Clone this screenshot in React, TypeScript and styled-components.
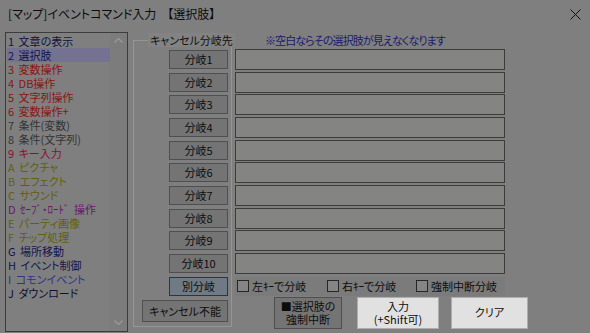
import React from "react";
import styled, { createGlobalStyle } from "styled-components";

const Global = createGlobalStyle`
  html, body { margin: 0; padding: 0; background: #7f7f7f; }
  body {
    font-family: "Noto Sans CJK JP", "Noto Sans", sans-serif;
    font-size: 11px;
  }
  * { box-sizing: border-box; }
`;

const Window = styled.div`
  width: 590px;
  height: 333px;
  overflow: hidden;
  background: #7f7f7f;
  color: #0d0d0d;
  display: flex;
  flex-direction: column;
  font-feature-settings: "palt";
`;

const TitleBar = styled.div`
  height: 28px;
  flex: none;
  display: flex;
  align-items: center;
  justify-content: space-between;
  padding: 0 9px 0 8px;
  font-size: 12px;
`;

const Title = styled.div`
  display: flex;
  gap: 11px;
  white-space: nowrap;
  line-height: 14px;
`;

const Body = styled.div`
  flex: 1;
  min-height: 0;
  display: flex;
  align-items: flex-start;
  padding: 4px 0 0 5px;
`;

const ListBox = styled.div`
  width: 123px;
  height: 300px;
  margin-right: 5px;
  border: 1px solid #3c3c3c;
  display: flex;
  flex: none;
`;

const ListItems = styled.ul`
  list-style: none;
  margin: 0;
  padding: 1px 0 0 1px;
  flex: 1;
`;

const ListItem = styled.li<{ $c: string; $sel?: boolean }>`
  height: 14px;
  line-height: 14px;
  padding-left: 1px;
  word-spacing: 2px;
  color: ${(p) => p.$c};
  background: ${(p) => (p.$sel ? "#737391" : "transparent")};
  white-space: nowrap;
`;

const ScrollBar = styled.div`
  width: 17px;
  background: #7c7c7c;
  display: flex;
  flex-direction: column;
  justify-content: space-between;
  align-items: center;
  padding: 5px 0 6px;
`;

const GroupBox = styled.fieldset`
  margin: 1px 3px 0 0;
  width: 99px;
  min-width: 0;
  min-inline-size: 0;
  height: 294px;
  border: 1px solid #959595;
  padding: 0 3px 4px 9px;
  display: flex;
  flex-direction: column;
  align-items: flex-end;
  flex: none;
`;

const Legend = styled.legend`
  margin-left: 5px;
  padding: 0 2px;
  background: #838383;
  line-height: 14px;
  white-space: nowrap;
  color: #111;
`;

const RowGrid = styled.div`
  margin-top: 2px;
  display: grid;
  grid-template-rows: repeat(11, 21px);
  row-gap: 1.67px;
  align-items: center;
`;

const Btn = styled.button<{ $w?: number; $h?: number; $variant?: "dim" | "focus" | "bright" }>`
  font: inherit;
  font-feature-settings: "palt";
  width: ${(p) => p.$w ?? 59}px;
  height: ${(p) => p.$h ?? 19}px;
  padding: 0;
  line-height: 13px;
  color: #0d0d0d;
  border: 1px solid
    ${(p) => (p.$variant === "focus" ? "#1c3a58" : p.$variant === "bright" ? "#adadad" : "#4f4f4f")};
  background: ${(p) =>
    p.$variant === "focus" ? "#6f7a85" : p.$variant === "bright" ? "#e1e1e1" : "#747474"};
  white-space: pre;
`;

const CancelWrap = styled.div`
  margin-top: auto;
`;

const Editor = styled.div`
  display: flex;
  flex-direction: column;
`;

const Note = styled.div`
  height: 14px;
  margin-top: 1px;
  line-height: 14px;
  padding-left: 30px;
  letter-spacing: -0.9px;
  white-space: nowrap;
  color: #1a1a6c;
`;

const InputGrid = styled.div`
  margin-top: 2px;
  display: grid;
  grid-template-rows: repeat(10, 21px);
  row-gap: 1.67px;
`;

const TextBox = styled.div`
  width: 270px;
  height: 21px;
  border: 1px solid #3c3c3c;
  background: #848482;
`;

const CheckRow = styled.div`
  margin-top: 3px;
  width: 270px;
  height: 19px;
  background: #7b7b7b;
  display: grid;
  grid-template-columns: 90px 89px auto;
  align-items: center;
  padding-left: 2px;
`;

const CheckItem = styled.label`
  display: flex;
  align-items: center;
  gap: 3px;
  white-space: nowrap;
`;

const Box = styled.span`
  width: 12px;
  height: 12px;
  border: 1px solid #262626;
  background: #858585;
  flex: none;
`;

const BottomRow = styled.div`
  margin-top: 1px;
  padding-left: 39px;
  display: flex;
  align-items: flex-start;
  gap: 15px;
`;

const BrightGroup = styled.div`
  display: flex;
  gap: 12px;
`;

const items: { t: string; c: string }[] = [
  { t: "1 文章の表示", c: "#121246" },
  { t: "2 選択肢", c: "#121246" },
  { t: "3 変数操作", c: "#8a1414" },
  { t: "4 DB操作", c: "#8a1414" },
  { t: "5 文字列操作", c: "#8a1414" },
  { t: "6 変数操作+", c: "#8a1414" },
  { t: "7 条件(変数)", c: "#343434" },
  { t: "8 条件(文字列)", c: "#343434" },
  { t: "9 キー入力", c: "#8c1030" },
  { t: "A ピクチャ", c: "#5f5f0e" },
  { t: "B エフェクト", c: "#5f5f0e" },
  { t: "C サウンド", c: "#5f5f0e" },
  { t: "D ｾｰﾌﾞ・ﾛｰﾄﾞ 操作", c: "#6a186a" },
  { t: "E パーティ画像", c: "#5f5f0e" },
  { t: "F チップ処理", c: "#5f5f0e" },
  { t: "G 場所移動", c: "#14144a" },
  { t: "H イベント制御", c: "#14144a" },
  { t: "I コモンイベント", c: "#32328a" },
  { t: "J ダウンロード", c: "#101032" },
];

const Chevron = ({ up }: { up?: boolean }) => (
  <svg width="9" height="5" viewBox="0 0 9 5">
    <polyline
      points={up ? "0.5,4.5 4.5,0.5 8.5,4.5" : "0.5,0.5 4.5,4.5 8.5,0.5"}
      fill="none"
      stroke="#9a9a9a"
      strokeWidth="1.2"
    />
  </svg>
);

const CloseIcon = () => (
  <svg width="11" height="11" viewBox="0 0 11 11">
    <path d="M0.5 0.5 L10.5 10.5 M10.5 0.5 L0.5 10.5" stroke="#111" strokeWidth="1" />
  </svg>
);

export default function App() {
  const branches = Array.from({ length: 10 }, (_, i) => `分岐${i + 1}`);
  return (
    <>
      <Global />
      <Window>
        <TitleBar>
          <Title>
            <span>[マップ]イベントコマンド入力</span>
            <span>【選択肢】</span>
          </Title>
          <CloseIcon />
        </TitleBar>
        <Body>
          <ListBox>
            <ListItems>
              {items.map((it, i) => (
                <ListItem key={it.t} $c={it.c} $sel={i === 1}>
                  {it.t}
                </ListItem>
              ))}
            </ListItems>
            <ScrollBar>
              <Chevron up />
              <Chevron />
            </ScrollBar>
          </ListBox>
          <GroupBox>
            <Legend>キャンセル分岐先</Legend>
            <RowGrid>
              {branches.map((b) => (
                <Btn key={b}>{b}</Btn>
              ))}
              <Btn $variant="focus">別分岐</Btn>
            </RowGrid>
            <CancelWrap>
              <Btn $w={86} $h={22}>
                キャンセル不能
              </Btn>
            </CancelWrap>
          </GroupBox>
          <Editor>
            <Note>※空白ならその選択肢が見えなくなります</Note>
            <InputGrid>
              {branches.map((b) => (
                <TextBox key={b} />
              ))}
            </InputGrid>
            <CheckRow>
              <CheckItem>
                <Box />
                左ｷｰで分岐
              </CheckItem>
              <CheckItem>
                <Box />
                右ｷｰで分岐
              </CheckItem>
              <CheckItem>
                <Box />
                強制中断分岐
              </CheckItem>
            </CheckRow>
            <BottomRow>
              <Btn $w={68} $h={32}>
                {"■選択肢の\n強制中断"}
              </Btn>
              <BrightGroup>
                <Btn $w={82} $h={32} $variant="bright">
                  {"入力\n(+Shift可)"}
                </Btn>
                <Btn $w={77} $h={32} $variant="bright">
                  クリア
                </Btn>
              </BrightGroup>
            </BottomRow>
          </Editor>
        </Body>
      </Window>
    </>
  );
}
